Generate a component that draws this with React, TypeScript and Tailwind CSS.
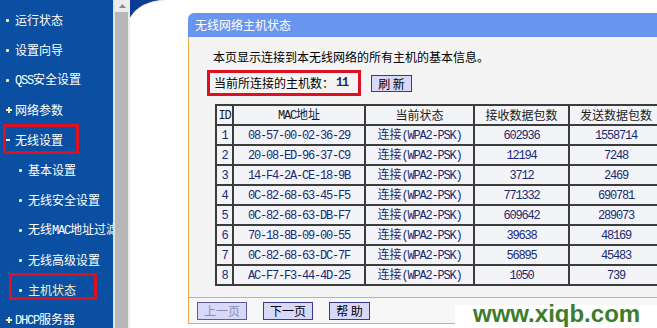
import React from "react";

const MONO = "font-['Liberation_Mono',monospace] text-[12px] tracking-[-1.2px]";

function T({ s, className = "" }: { s: string; className?: string }) {
  const parts = s.split(/([\x20-\x7e]+)/).filter((p) => p.length > 0);
  return (
    <span className={className}>
      {parts.map((p, i) =>
        /^[\x20-\x7e]+$/.test(p) ? (
          <span key={i} className={MONO}>
            {p}
          </span>
        ) : (
          <span key={i}>{p}</span>
        )
      )}
    </span>
  );
}

type Item = { t: string; sub?: boolean; mark: "dot" | "plus" | "minus"; box?: "a" | "b"; yellow?: boolean };

const items: Item[] = [
  { t: "运行状态", mark: "dot" },
  { t: "设置向导", mark: "dot" },
  { t: "QSS安全设置", mark: "dot" },
  { t: "网络参数", mark: "plus" },
  { t: "无线设置", mark: "minus", box: "a" },
  { t: "基本设置", sub: true, mark: "dot" },
  { t: "无线安全设置", sub: true, mark: "dot" },
  { t: "无线MAC地址过滤", sub: true, mark: "dot" },
  { t: "无线高级设置", sub: true, mark: "dot" },
  { t: "主机状态", sub: true, mark: "dot", box: "b", yellow: true },
  { t: "DHCP服务器", mark: "plus" },
];

const rows = [
  ["1", "08-57-00-02-36-29", "602936", "1558714"],
  ["2", "20-08-ED-96-37-C9", "12194", "7248"],
  ["3", "14-F4-2A-CE-18-9B", "3712", "2469"],
  ["4", "0C-82-68-63-45-F5", "771332", "690781"],
  ["5", "0C-82-68-63-DB-F7", "609642", "289073"],
  ["6", "70-18-8B-09-00-55", "39638", "48169"],
  ["7", "0C-82-68-63-DC-7F", "56895", "45483"],
  ["8", "AC-F7-F3-44-4D-25", "1050", "739"],
];

function Marker({ m }: { m: Item["mark"] }) {
  if (m === "dot") return <span className="block w-[3px] h-[3px] rounded-[1px] bg-[#f0f0a8]" />;
  if (m === "minus") return <span className="block w-[4px] h-[2px] bg-[#f4f4e0]" />;
  return (
    <span className="relative block w-[6px] h-[6px]">
      <span className="absolute left-0 top-[2px] w-[6px] h-[2px] bg-[#f0f0a8]" />
      <span className="absolute left-[2px] top-0 w-[2px] h-[6px] bg-[#f0f0a8]" />
    </span>
  );
}

const cell = "border-2 border-[#3c3c3c] text-center p-0 h-[18px] leading-[16px] whitespace-nowrap";

export default function App() {
  return (
    <div className="relative w-[657px] h-[328px] overflow-hidden bg-white flex font-['Noto_Sans_CJK_SC',sans-serif] text-[12px]">
      {/* sidebar */}
      <div className="w-[113px] shrink-0 bg-[#0b4fa2] overflow-hidden whitespace-nowrap pt-[5px] text-white">
        {items.map((it, i) => (
          <div key={i} className={`relative h-[30px] flex items-center ${it.sub ? "pl-[19px]" : "pl-[5px]"}`}>
            <span className={`shrink-0 flex items-center ${it.sub ? "w-[9px]" : "w-[10px] pl-[1px]"}`}>
              <Marker m={it.mark} />
            </span>
            <T s={it.t} className={`shrink-0 ${it.yellow ? "text-[#f4f4c8]" : "text-white"}`} />
            {it.box === "a" && (
              <span className="absolute left-[3px] top-[-1px] w-[76px] h-[30px] border-[3px] border-[#dc1020]" />
            )}
            {it.box === "b" && (
              <span className="absolute left-[9px] top-[-2px] w-[88px] h-[27px] border-[3px] border-[#dc1020]" />
            )}
          </div>
        ))}
      </div>

      {/* scrollbar */}
      <div className="w-[17px] shrink-0 bg-[#ececec] border-l-2 border-[#e2e2e2] flex flex-col">
        <div className="h-[12px] flex items-center justify-center">
          <svg width="7" height="4" viewBox="0 0 7 4">
            <path d="M0 4 L3.5 0 L7 4 Z" fill="#8a8a8a" />
          </svg>
        </div>
        <div className="flex-1 bg-[#b7b7b7] mr-[2px]" />
      </div>

      {/* content */}
      <div className="relative flex-1 min-w-0">
        <svg className="absolute left-0 top-0" width="36" height="20" viewBox="0 0 36 20">
          <path d="M0 0 H34 Q9 2 0 18 Z" fill="#0a3c98" />
          <path d="M34 0 Q9 2 0 18" stroke="#f4ecc8" strokeWidth="1" fill="none" />
        </svg>

        <div className="ml-[58px] mt-[13px] w-[500px]">
          <div className="h-[24px] bg-[#6795f0] rounded-tl-[6px] pl-[7px] leading-[24px] text-white">无线网络主机状态</div>
          <div className="border-l border-[#f0a848] bg-[#f4f4f4] pl-[24px] pt-[12px] pb-[11px]">
            <div className="h-[16px] leading-[16px] text-black">本页显示连接到本无线网络的所有主机的基本信息。</div>
            <div className="mt-[5px] h-[26px] flex items-center">
              <div className="ml-[-6px] w-[154px] h-[26px] border-[3px] border-[#dc1020] pl-[4px] flex items-center text-black whitespace-nowrap leading-[16px]">
                当前所连接的主机数：
                <span className="font-['Liberation_Mono',monospace] text-[12px] font-bold text-[#1a2a70] tracking-[-1.2px] ml-[2px]">11</span>
              </div>
              <button className="ml-[10px] mt-[1px] w-[41px] h-[17px] border border-[#3a3a8a] bg-[#d8d8f8] text-black text-[12px] leading-[15px]">
                刷 新
              </button>
            </div>
            <table className="mt-[8px] ml-[2px] border-collapse bg-[#f3f4f8] text-[#1a2a70]">
              <thead>
                <tr className="text-[#1a1a1a]">
                  <th className={`${cell} w-[17px] font-normal`}>
                    <span className={MONO}>ID</span>
                  </th>
                  <th className={`${cell} w-[132px] font-normal`}>
                    <T s="MAC地址" />
                  </th>
                  <th className={`${cell} w-[109px] font-normal`}>当前状态</th>
                  <th className={`${cell} w-[95px] font-normal`}>接收数据包数</th>
                  <th className={`${cell} w-[94px] font-normal`}>发送数据包数</th>
                </tr>
              </thead>
              <tbody>
                {rows.map((r) => (
                  <tr key={r[0]}>
                    <td className={cell}>
                      <span className={MONO}>{r[0]}</span>
                    </td>
                    <td className={cell}>
                      <span className={MONO}>{r[1]}</span>
                    </td>
                    <td className={cell}>
                      <T s="连接(WPA2-PSK)" />
                    </td>
                    <td className={cell}>
                      <span className={MONO}>{r[2]}</span>
                    </td>
                    <td className={cell}>
                      <span className={MONO}>{r[3]}</span>
                    </td>
                  </tr>
                ))}
              </tbody>
            </table>
          </div>
          <div className="h-[27px] border-t border-b border-l border-[#f0a848] bg-[#f7f7f7] pl-[8px] flex items-center gap-[16px]">
            <button className="w-[50px] h-[18px] border border-[#5a5aa0] bg-[#d8d8f8] text-[#8c8cb0] text-[12px] leading-[16px]">上一页</button>
            <button className="w-[50px] h-[18px] border border-[#3a3a8a] bg-[#d8d8f8] text-black text-[12px] leading-[16px]">下一页</button>
            <button className="w-[41px] h-[18px] border border-[#3a3a8a] bg-[#d8d8f8] text-black text-[12px] leading-[16px]">帮 助</button>
          </div>
        </div>
      </div>

      {/* watermark */}
      <div className="absolute right-0 bottom-0 w-[202px] h-[23px] bg-white pl-[18px]">
        <div className="font-['Liberation_Sans',sans-serif] font-bold text-[24px] leading-[17px] text-[#3b7d2b] whitespace-nowrap">
          www.xiqb.com
        </div>
      </div>
    </div>
  );
}
